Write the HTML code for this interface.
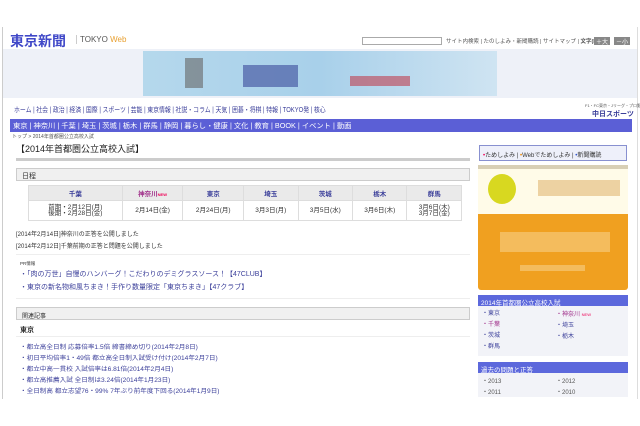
<!DOCTYPE html><html><head><meta charset="utf-8"><style>
*{margin:0;padding:0;box-sizing:border-box}
body{width:640px;height:426px;background:#fff;font-family:"Liberation Sans","Noto Sans CJK JP",sans-serif;position:relative;overflow:hidden;color:#333}
.a{position:absolute;white-space:nowrap}
.s{font-size:6px}
.lnk{color:#3b3f9a}
.box{border:1px solid #ccc}
</style></head><body>
<div class="a" style="left:2px;top:27px;width:636px;height:372px;border-left:1px solid #ccc;border-right:1px solid #ddd"></div>
<div class="a" style="left:10px;top:31px;font-size:14px;font-weight:bold;color:#4048c8">東京新聞</div>
<div class="a" style="left:76px;top:35px;font-size:8px;color:#555;border-left:1px solid #ccc;padding-left:3px">TOKYO <span style="color:#e8a030">Web</span></div>
<div class="a" style="left:362px;top:37px;width:80px;height:8px;border:1px solid #aaa;background:#fff"></div>
<div class="a" style="left:446px;top:37px;color:#555;font-size:5.5px">サイト内検索 | たのしよみ・新聞購読 | サイトマップ | <b>文字(K)</b></div>
<div class="a" style="left:594px;top:37px;width:16px;height:8px;background:#888;color:#fff;font-size:6px;text-align:center">＋大</div>
<div class="a" style="left:614px;top:37px;width:16px;height:8px;background:#888;color:#fff;font-size:6px;text-align:center">－小</div>
<div class="a" style="left:3px;top:49px;width:634px;height:49px;background:#eef1f8"></div>
<div class="a" style="left:143px;top:51px;width:354px;height:45px;background:linear-gradient(90deg,#b5d8ec,#a8d0ea 50%,#cfe4f2)"></div>
<div class="a" style="left:185px;top:58px;width:18px;height:30px;background:#666;opacity:.6"></div>
<div class="a" style="left:243px;top:65px;width:55px;height:22px;background:#3a4a9a;opacity:.6"></div>
<div class="a" style="left:350px;top:76px;width:60px;height:10px;background:#c04050;opacity:.6"></div>
<div class="a" style="left:14px;top:105px;font-size:7px;color:#3b3f9a;transform:scaleX(0.84);transform-origin:left">ホーム | 社会 | 政治 | 経済 | 国際 | スポーツ | 芸能 | 東京情報 | 社説・コラム | 天気 | 囲碁・将棋 | 特報 | TOKYO発 | 核心</div>
<div class="a" style="left:585px;top:103px;font-size:4px;color:#555">F1・FC東京・Jリーグ・プロ野球速報</div>
<div class="a" style="left:592px;top:109px;font-size:7px;color:#3b3f9a;font-weight:bold">中日スポーツ</div>
<div class="a" style="left:10px;top:119px;width:622px;height:13px;background:#5b5fd6"></div>
<div class="a" style="left:13px;top:121px;font-size:7px;color:#fff;transform:scaleX(1.04);transform-origin:left">東京 | 神奈川 | 千葉 | 埼玉 | 茨城 | 栃木 | 群馬 | 静岡 | 暮らし・健康 | 文化 | 教育 | BOOK | イベント | 動画</div>
<div class="a" style="left:12px;top:133px;font-size:5px;color:#555">トップ &gt; 2014年首都圏公立高校入試</div>
<div class="a" style="left:16px;top:142px;font-size:9px;color:#222">【2014年首都圏公立高校入試】</div>
<div class="a" style="left:16px;top:158px;width:454px;height:3px;background:#ccc"></div>
<div class="a box" style="left:16px;top:168px;width:454px;height:13px;background:#f0f0f0;font-size:7px;padding:2px 5px">日程</div>
<table class="a" style="left:28px;top:185px;width:434px;border-collapse:collapse;font-size:6.5px;text-align:center">
<tr style="background:#eaeaea;height:15px;color:#3b3f9a;font-weight:bold"><td style="border:1px solid #ddd">千葉</td><td style="border:1px solid #ddd;color:#a0308a">神奈川<span style="font-size:4px;color:#e05">NEW</span></td><td style="border:1px solid #ddd">東京</td><td style="border:1px solid #ddd">埼玉</td><td style="border:1px solid #ddd">茨城</td><td style="border:1px solid #ddd">栃木</td><td style="border:1px solid #ddd">群馬</td></tr>
<tr style="height:20px;line-height:6px"><td style="border:1px solid #ddd">前期・2月12日(月)<br>後期・2月28日(金)</td><td style="border:1px solid #ddd">2月14日(金)</td><td style="border:1px solid #ddd">2月24日(月)</td><td style="border:1px solid #ddd">3月3日(月)</td><td style="border:1px solid #ddd">3月5日(水)</td><td style="border:1px solid #ddd">3月6日(木)</td><td style="border:1px solid #ddd">3月6日(木)<br>3月7日(金)</td></tr></table>
<div class="a" style="left:16px;top:229px;font-size:6px">[2014年2月14日]神奈川の正答を公開しました</div>
<div class="a" style="left:16px;top:241px;font-size:6px">[2014年2月12日]千葉前期の正答と問題を公開しました</div>
<div class="a" style="left:16px;top:254px;width:454px;border-top:1px solid #eee"></div>
<div class="a" style="left:20px;top:261px;font-size:4.5px">PR情報</div>
<div class="a lnk" style="left:20px;top:269px;font-size:7px">・「肉の万世」自慢のハンバーグ！こだわりのデミグラスソース！【47CLUB】</div>
<div class="a lnk" style="left:20px;top:282px;font-size:7px">・東京の新名物和風ちまき！手作り数量限定「東京ちまき」【47クラブ】</div>
<div class="a" style="left:16px;top:298px;width:454px;border-top:1px solid #eee"></div>
<div class="a box" style="left:16px;top:307px;width:454px;height:13px;background:#f0f0f0;font-size:6px;padding:3px 5px">関連記事</div>
<div class="a" style="left:20px;top:325px;font-size:7px;font-weight:bold">東京</div>
<div class="a" style="left:16px;top:336px;width:454px;border-top:1px solid #eee"></div>
<div class="a lnk" style="left:20px;top:343px;font-size:6px;line-height:11px;transform:scaleX(1.1);transform-origin:left">・都立高全日制 応募倍率1.5倍 締書締め切り(2014年2月8日)<br>・初日平均倍率1・49倍 都立高全日制入試受け付け(2014年2月7日)<br>・都立中高一貫校 入試倍率は6.81倍(2014年2月4日)<br>・都立高推薦入試 全日制は3.24倍(2014年1月23日)<br>・全日制高 都立志望76・99% 7年ぶり前年度下回る(2014年1月9日)</div>
<div class="a" style="left:479px;top:145px;width:148px;height:16px;border:1px solid #8890d0;background:#eef0fa;font-size:6px;padding:4px 3px;color:#333"><span style="color:#e05">•</span>ためしよみ | <span style="color:#e80">•</span>Webでためしよみ | <span style="color:#35c">•</span>新聞購読</div>
<div class="a" style="left:478px;top:165px;width:150px;height:4px;background:#d8cfb5"></div>
<div class="a" style="left:478px;top:169px;width:150px;height:45px;background:#fffbe8"></div>
<div class="a" style="left:488px;top:174px;width:28px;height:30px;border-radius:50%;background:#d8d820"></div>
<div class="a" style="left:538px;top:180px;width:82px;height:16px;background:#e8c890;opacity:.8"></div>
<div class="a" style="left:478px;top:214px;width:150px;height:76px;background:#f0a020;border-radius:0 0 3px 3px"></div>
<div class="a" style="left:500px;top:232px;width:110px;height:20px;background:#f5c878;opacity:.7"></div>
<div class="a" style="left:520px;top:265px;width:65px;height:6px;background:#f5c878;opacity:.7"></div>
<div class="a" style="left:478px;top:295px;width:150px;height:11px;background:#5c68dc;color:#fff;font-size:6.5px;padding:2px 3px">2014年首都圏公立高校入試</div>
<div class="a" style="left:478px;top:306px;width:150px;height:50px;background:#f2f3f8"></div>
<div class="a lnk" style="left:482px;top:309px;font-size:6px;line-height:11px">・東京<br><span style="color:#a0308a">・千葉</span><br>・茨城<br>・群馬</div>
<div class="a lnk" style="left:556px;top:309px;font-size:6px;line-height:11px"><span style="color:#a0308a">・神奈川 <span style="font-size:4px;color:#e05">NEW</span></span><br>・埼玉<br>・栃木</div>
<div class="a" style="left:478px;top:362px;width:150px;height:11px;background:#5c68dc;color:#fff;font-size:6.5px;padding:2px 3px">過去の問題と正答</div>
<div class="a" style="left:478px;top:373px;width:150px;height:24px;background:#f2f3f8"></div>
<div class="a" style="left:482px;top:377px;font-size:6px;line-height:11px;color:#555">・2013<br>・2011</div>
<div class="a" style="left:556px;top:377px;font-size:6px;line-height:11px;color:#555">・2012<br>・2010</div>
</body></html>
